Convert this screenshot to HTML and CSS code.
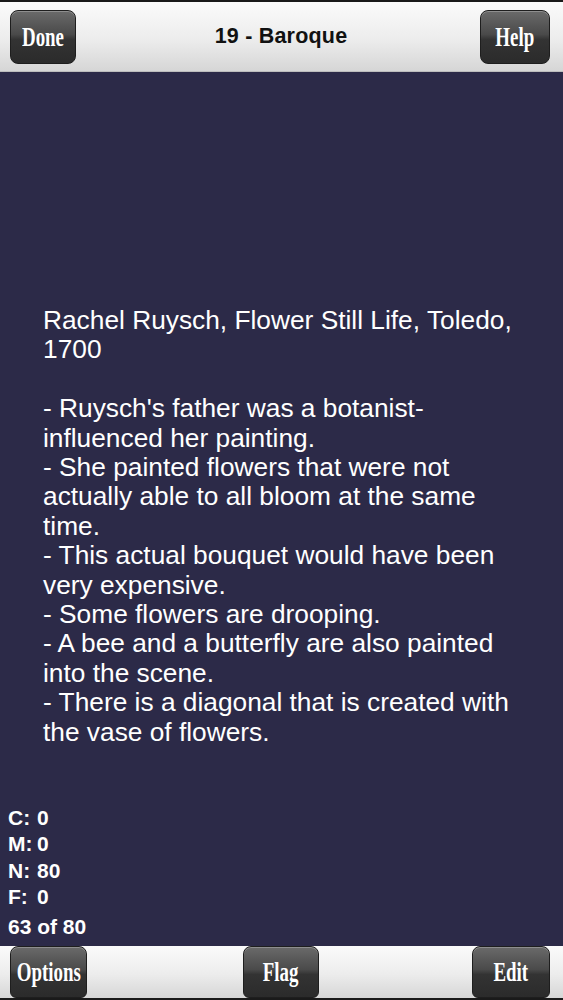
FILE: index.html
```html
<!DOCTYPE html>
<html lang="en">
<head>
    <meta charset="UTF-8">
    <meta name="viewport" content="width=device-width, initial-scale=1.0">
    <title>19 - Baroque</title>
    <link rel="stylesheet" href="styles.css">
</head>
<body>
    <div class="screen">
        <header class="top-bar">
            <button class="bar-button done-button"><span>Done</span></button>
            <h1 class="deck-title">19 - Baroque</h1>
            <button class="bar-button help-button"><span>Help</span></button>
        </header>

        <main class="card-area">
            <div class="card-text">
                <p>Rachel Ruysch, Flower Still Life, Toledo, 1700</p>
                <p>- Ruysch's father was a botanist-influenced her painting.<br>
                - She painted flowers that were not actually able to all bloom at the same time.<br>
                - This actual bouquet would have been very expensive.<br>
                - Some flowers are drooping.<br>
                - A bee and a butterfly are also painted into the scene.<br>
                - There is a diagonal that is created with the vase of flowers.</p>
            </div>

            <div class="stats">
                <div><span class="stat-label">C:</span>0</div>
                <div><span class="stat-label">M:</span>0</div>
                <div><span class="stat-label">N:</span>80</div>
                <div><span class="stat-label">F:</span>0</div>
                <div class="progress">63 of 80</div>
            </div>
        </main>

        <footer class="bottom-bar">
            <button class="bar-button options-button"><span>Options</span></button>
            <button class="bar-button flag-button"><span>Flag</span></button>
            <button class="bar-button edit-button"><span>Edit</span></button>
        </footer>
    </div>
</body>
</html>
```

FILE: styles.css
```css
* {
    box-sizing: border-box;
}

body {
    margin: 0;
    font-family: "Liberation Sans", Arial, sans-serif;
    background-color: #2c2a48;
}

.screen {
    width: 563px;
    height: 1000px;
    display: flex;
    flex-direction: column;
    overflow: hidden;
}

/* top and bottom bars share the light gradient */
.top-bar, .bottom-bar {
    background: linear-gradient(to bottom, #fbfbfb 0%, #ececec 55%, #d6d6d6 100%);
    display: flex;
    align-items: center;
    justify-content: space-between;
}

.top-bar {
    height: 72px;
    border-top: 2px solid #1a1a1a;
    border-bottom: 1px solid #bdbdbd;
    padding: 0 13px 0 10px;
}

.deck-title {
    margin: 0 0 0 6px;
    font-size: 21.5px;
    font-weight: bold;
    color: #111;
    letter-spacing: 0.2px;
}

.bar-button {
    background: linear-gradient(to bottom, #6a6a6a 0%, #4a4a4a 45%, #333 55%, #2b2b2b 100%);
    border: 1px solid #1e1e1e;
    border-radius: 8px;
    color: #fff;
    font-family: "Liberation Serif", "Times New Roman", serif;
    font-weight: bold;
    font-size: 27px;
    padding: 0;
    cursor: pointer;
    display: flex;
    align-items: center;
    justify-content: center;
    box-shadow: inset 0 1px 0 rgba(255, 255, 255, 0.25);
}

.bar-button span {
    display: inline-block;
    transform: scaleX(0.7); /* narrow serif face */
}

.top-bar .bar-button {
    height: 54px;
    margin-top: 1px;
}

.done-button {
    width: 66px;
}

.help-button {
    width: 70px;
}

.card-area {
    flex: 1;
    display: flex;
    flex-direction: column;
    justify-content: space-between;
    color: #fff;
}

.card-text {
    padding: 234px 40px 0 43px;
    font-size: 26.3px;
    line-height: 29.4px;
}

.card-text p {
    margin: 0 0 29.4px 0;
}

.stats {
    padding: 0 0 6px 8px;
    font-size: 21px;
    font-weight: bold;
    line-height: 26.5px;
}

.stat-label {
    display: inline-block;
    width: 29px;
}

.stats .progress {
    margin-top: 3px;
}

.bottom-bar {
    height: 54px;
    align-items: flex-end;
    padding: 0 13px 0 10px;
    border-bottom: 2px solid #1a1a1a;
}

.bottom-bar .bar-button {
    height: 52px;
    border-bottom-left-radius: 6px;
    border-bottom-right-radius: 6px;
}

.options-button {
    width: 77px;
}

.flag-button {
    width: 76px;
    margin-left: 2px;
}

.edit-button {
    width: 78px;
}
```
